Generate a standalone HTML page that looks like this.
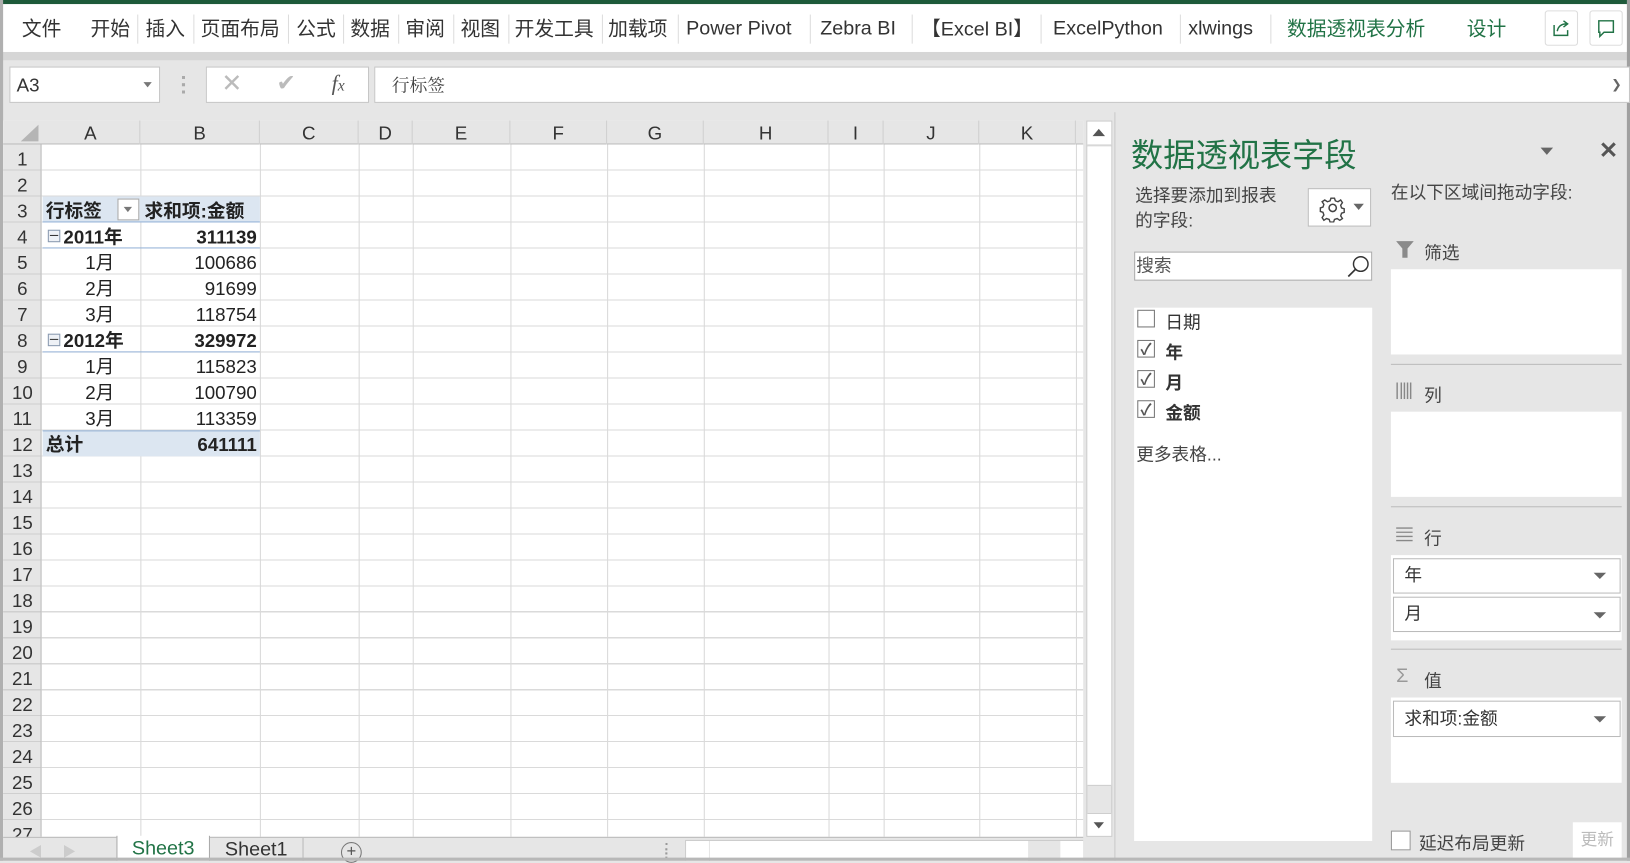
<!DOCTYPE html>
<html><head><meta charset="utf-8">
<style>
*{margin:0;padding:0;box-sizing:border-box}
html,body{width:1630px;height:861px;overflow:hidden;background:#e6e6e6}
#w{position:absolute;left:0;top:0;width:1568px;height:828px;transform:scale(1.03954);transform-origin:0 0;background:#e6e6e6;font-family:"Liberation Sans","Noto Sans CJK SC",sans-serif;color:#222}
.a{position:absolute}
.tab{position:absolute;top:15px;height:28px;line-height:28px;font-size:19px;color:#333;white-space:nowrap;font-family:"Liberation Sans","Noto Sans CJK SC",sans-serif}
.tab.l{top:14px}
.sep{position:absolute;top:14px;width:1px;height:28px;background:#ddd}
.rn{position:absolute;left:3px;width:37px;text-align:center;font-size:18px;color:#333;height:25px;line-height:27px}
.ch{position:absolute;top:116px;height:23px;text-align:center;font-size:18px;color:#333;line-height:24px;border-right:1px solid #d0d0d0}
.cl{position:absolute;top:139px;width:1px;height:666px;background:#d9d9d9}
.c{position:absolute;font-size:18px;height:25px;line-height:26px;white-space:nowrap}
.cb{position:absolute;width:17px;height:17px;border:1px solid #777;background:#fff}
.dd{position:absolute;width:0;height:0;border-left:6px solid transparent;border-right:6px solid transparent;border-top:6px solid #666}
.ck{position:absolute;font-size:15px;color:#555;font-weight:bold}
</style></head><body><div id="w">
<div class="a" style="left:0;top:0;width:1568px;height:4px;background:#1e5a3a"></div>
<div class="a" style="left:0;top:4px;width:1568px;height:46px;background:#fff"></div>
<div class="a" style="left:0;top:50px;width:1568px;height:8px;background:#d6d6d6"></div>
<div class="a" style="left:0;top:0;width:3px;height:828px;background:#b0b0b0"></div>
<div class="a" style="left:1565px;top:0;width:3px;height:828px;background:#a0a0a0"></div>
<span class="tab" style="left:21px">文件</span>
<span class="tab" style="left:87px">开始</span><div class="sep" style="left:132px"></div>
<span class="tab" style="left:140px">插入</span><div class="sep" style="left:186px"></div>
<span class="tab" style="left:193px">页面布局</span><div class="sep" style="left:277px"></div>
<span class="tab" style="left:285px">公式</span><div class="sep" style="left:330px"></div>
<span class="tab" style="left:337px">数据</span><div class="sep" style="left:383px"></div>
<span class="tab" style="left:390px">审阅</span><div class="sep" style="left:436px"></div>
<span class="tab" style="left:443px">视图</span><div class="sep" style="left:489px"></div>
<span class="tab" style="left:495px">开发工具</span><div class="sep" style="left:579px"></div>
<span class="tab" style="left:585px">加载项</span><div class="sep" style="left:652px"></div>
<span class="tab l" style="left:660px">Power Pivot</span><div class="sep" style="left:779px"></div>
<span class="tab l" style="left:789px">Zebra BI</span><div class="sep" style="left:877px"></div>
<span class="tab" style="left:886px">【Excel BI】</span><div class="sep" style="left:1001px"></div>
<span class="tab l" style="left:1013px">ExcelPython</span><div class="sep" style="left:1135px"></div>
<span class="tab l" style="left:1143px">xlwings</span><div class="sep" style="left:1222px"></div>
<span class="tab" style="left:1238px;color:#217346">数据透视表分析</span>
<span class="tab" style="left:1411px;color:#217346">设计</span>
<div class="a" style="left:1486px;top:10px;width:32px;height:34px;border:1px solid #ddd;border-radius:3px"><svg width="30" height="32" viewBox="0 0 30 32"><path d="M8 13v10h13v-5M11 19c1-5 4-7 9-7M17 9l4 3-4 3" fill="none" stroke="#217346" stroke-width="1.4"/></svg></div>
<div class="a" style="left:1529px;top:10px;width:32px;height:34px;border:1px solid #ddd;border-radius:3px"><svg width="30" height="32" viewBox="0 0 30 32"><path d="M8 9h14v11H13l-4 4v-4H8z" fill="none" stroke="#217346" stroke-width="1.4"/></svg></div>
<div class="a" style="left:9px;top:64px;width:145px;height:35px;background:#fff;border:1px solid #c6c6c6;font-size:18px;line-height:34px;padding-left:6px;color:#333">A3</div>
<div class="dd" style="left:138px;top:79px;border-width:5px 4px 0 4px;border-top-color:#777"></div>
<div class="a" style="left:175px;top:73px;width:3px;height:17px;border-left:3px dotted #aaa"></div>
<div class="a" style="left:198px;top:64px;width:157px;height:35px;background:#fff;border:1px solid #c6c6c6"></div>
<span class="a" style="left:213px;top:66px;font-size:24px;color:#bbb">✕</span>
<span class="a" style="left:266px;top:67px;font-size:22px;color:#bbb">✔</span>
<span class="a" style="left:319px;top:68px;font-size:21px;color:#555;font-family:'Liberation Serif',serif;font-style:italic">f<span style="font-size:15px">x</span></span>
<div class="a" style="left:360px;top:64px;width:1208px;height:35px;background:#fff;border:1px solid #c6c6c6;font-size:17px;line-height:32px;padding-left:16px;color:#444;font-family:'Noto Serif CJK SC',serif">行标签</div>
<span class="a" style="left:1550px;top:74px;font-size:12px;color:#666">❯</span>
<div class="a" style="left:3px;top:116px;width:1039px;height:689px;background:#fff"></div>
<div class="a" style="left:3px;top:116px;width:1039px;height:23px;background:#e6e6e6;border-bottom:1px solid #bcbcbc"></div>
<div class="a" style="left:3px;top:139px;width:37px;height:666px;background:#e6e6e6;border-right:1px solid #bcbcbc;background-image:repeating-linear-gradient(to bottom,transparent 0 24px,#cfcfcf 24px 25px)"></div>
<div class="a" style="left:40px;top:139px;width:1002px;height:666px;background-image:repeating-linear-gradient(to bottom,transparent 0 24px,#dadada 24px 25px)"></div>
<svg class="a" style="left:18px;top:119px" width="20" height="18"><path d="M19 1V17H2z" fill="#b5b5b5"/></svg>
<div class="ch" style="left:40px;width:95px">A</div><div class="ch" style="left:135px;width:115px">B</div><div class="ch" style="left:250px;width:95px">C</div><div class="ch" style="left:345px;width:52px">D</div><div class="ch" style="left:397px;width:94px">E</div><div class="ch" style="left:491px;width:93px">F</div><div class="ch" style="left:584px;width:93px">G</div><div class="ch" style="left:677px;width:120px">H</div><div class="ch" style="left:797px;width:53px">I</div><div class="ch" style="left:850px;width:92px">J</div><div class="ch" style="left:942px;width:93px">K</div>
<div class="cl" style="left:135px"></div><div class="cl" style="left:250px"></div><div class="cl" style="left:345px"></div><div class="cl" style="left:397px"></div><div class="cl" style="left:491px"></div><div class="cl" style="left:584px"></div><div class="cl" style="left:677px"></div><div class="cl" style="left:797px"></div><div class="cl" style="left:850px"></div><div class="cl" style="left:942px"></div><div class="cl" style="left:1035px"></div>
<div class="rn" style="top:140px">1</div><div class="rn" style="top:165px">2</div><div class="rn" style="top:190px">3</div><div class="rn" style="top:215px">4</div><div class="rn" style="top:240px">5</div><div class="rn" style="top:265px">6</div><div class="rn" style="top:290px">7</div><div class="rn" style="top:315px">8</div><div class="rn" style="top:340px">9</div><div class="rn" style="top:365px">10</div><div class="rn" style="top:390px">11</div><div class="rn" style="top:415px">12</div><div class="rn" style="top:440px">13</div><div class="rn" style="top:465px">14</div><div class="rn" style="top:490px">15</div><div class="rn" style="top:515px">16</div><div class="rn" style="top:540px">17</div><div class="rn" style="top:565px">18</div><div class="rn" style="top:590px">19</div><div class="rn" style="top:615px">20</div><div class="rn" style="top:640px">21</div><div class="rn" style="top:665px">22</div><div class="rn" style="top:690px">23</div><div class="rn" style="top:715px">24</div><div class="rn" style="top:740px">25</div><div class="rn" style="top:765px">26</div><div class="rn" style="top:790px;height:15px;overflow:hidden">27</div>
<div class="a" style="left:41px;top:189px;width:209px;height:25px;background:#dce6f1;border-bottom:1px solid #95b3d7"></div>
<div class="a" style="left:41px;top:314px;width:209px;height:25px;border-bottom:1px solid #95b3d7"></div>
<div class="a" style="left:41px;top:214px;width:209px;height:25px;border-bottom:1px solid #95b3d7"></div>
<div class="a" style="left:41px;top:414px;width:209px;height:25px;background:#dce6f1;border-top:1px solid #95b3d7"></div>
<div class="c" style="left:44px;top:190px;font-weight:bold">行标签</div>
<div class="a" style="left:113px;top:191px;width:21px;height:21px;background:#fff;border:1px solid #aaa"></div><div class="dd" style="left:119px;top:199px;border-width:5px 4px 0 4px;border-top-color:#777"></div>
<div class="c" style="left:139px;top:190px;font-weight:bold">求和项:金额</div>
<div class="a" style="left:46px;top:221px;width:12px;height:12px;border:1px solid #8a9ab0;background:#eef1f6"></div><div class="a" style="left:48px;top:226px;width:8px;height:1px;background:#333"></div>
<div class="c" style="left:61px;top:215px;font-weight:bold">2011年</div><div class="c" style="left:140px;width:107px;text-align:right;top:215px;font-weight:bold">311139</div>
<div class="c" style="left:82px;top:240px">1月</div><div class="c" style="left:140px;width:107px;text-align:right;top:240px">100686</div>
<div class="c" style="left:82px;top:265px">2月</div><div class="c" style="left:140px;width:107px;text-align:right;top:265px">91699</div>
<div class="c" style="left:82px;top:290px">3月</div><div class="c" style="left:140px;width:107px;text-align:right;top:290px">118754</div>
<div class="a" style="left:46px;top:321px;width:12px;height:12px;border:1px solid #8a9ab0;background:#eef1f6"></div><div class="a" style="left:48px;top:326px;width:8px;height:1px;background:#333"></div>
<div class="c" style="left:61px;top:315px;font-weight:bold">2012年</div><div class="c" style="left:140px;width:107px;text-align:right;top:315px;font-weight:bold">329972</div>
<div class="c" style="left:82px;top:340px">1月</div><div class="c" style="left:140px;width:107px;text-align:right;top:340px">115823</div>
<div class="c" style="left:82px;top:365px">2月</div><div class="c" style="left:140px;width:107px;text-align:right;top:365px">100790</div>
<div class="c" style="left:82px;top:390px">3月</div><div class="c" style="left:140px;width:107px;text-align:right;top:390px">113359</div>
<div class="c" style="left:44px;top:415px;font-weight:bold">总计</div><div class="c" style="left:140px;width:107px;text-align:right;top:415px;font-weight:bold">641111</div>
<div class="a" style="left:1045px;top:116px;width:25px;height:689px;background:#e6e6e6;border:1px solid #ccc"></div>
<div class="a" style="left:1046px;top:117px;width:23px;height:23px;background:#fff;border-bottom:1px solid #ccc"></div>
<div class="a" style="left:1051px;top:124px;border-left:6px solid transparent;border-right:6px solid transparent;border-bottom:7px solid #555"></div>
<div class="a" style="left:1046px;top:141px;width:23px;height:615px;background:#fff;border-bottom:1px solid #ccc"></div>
<div class="a" style="left:1046px;top:782px;width:23px;height:22px;background:#fff;border-top:1px solid #ccc"></div>
<div class="a" style="left:1052px;top:791px;border-left:5px solid transparent;border-right:5px solid transparent;border-top:6px solid #555"></div>
<div class="a" style="left:3px;top:805px;width:1039px;height:23px;background:#e6e6e6;border-top:1px solid #bbb"></div>
<span class="a" style="left:28px;top:809px;font-size:13px;color:#ccc">◀</span><span class="a" style="left:60px;top:809px;font-size:13px;color:#ccc">▶</span>
<div class="a" style="left:112px;top:804px;width:90px;height:24px;background:#fff;border-left:1px solid #aaa;border-right:1px solid #aaa;font-size:19px;color:#217346;text-align:center;line-height:26px">Sheet3</div>
<div class="a" style="left:202px;top:806px;width:90px;height:22px;font-size:19px;color:#333;text-align:center;line-height:24px;border-right:1px solid #bbb">Sheet1</div>
<div class="a" style="left:328px;top:810px;width:20px;height:20px;border:1px solid #777;border-radius:50%;font-size:16px;line-height:18px;text-align:center;color:#555">+</div>
<div class="a" style="left:640px;top:811px;width:2px;height:15px;border-left:2px dotted #999"></div>
<div class="a" style="left:659px;top:808px;width:383px;height:20px;background:#e6e6e6;border:1px solid #ccc"></div>
<div class="a" style="left:683px;top:809px;width:306px;height:19px;background:#fff"></div>
<div class="a" style="left:1020px;top:809px;width:22px;height:19px;background:#fff"></div>
<div class="a" style="left:660px;top:809px;width:22px;height:19px;background:#fff"></div>
<div class="a" style="left:1072px;top:108px;width:1px;height:720px;background:#c8c8c8"></div>
<div class="a" style="left:1088px;top:126px;font-size:31px;color:#217346;font-family:'Noto Sans CJK SC',sans-serif;line-height:42px">数据透视表字段</div>
<div class="a" style="left:1482px;top:142px;border-left:6px solid transparent;border-right:6px solid transparent;border-top:7px solid #666"></div>
<span class="a" style="left:1538px;top:132px;font-size:22px;color:#555;font-weight:bold">✕</span>
<div class="a" style="left:1092px;top:177px;font-size:17px;color:#444;line-height:24px">选择要添加到报表<br>的字段:</div>
<div class="a" style="left:1258px;top:181px;width:61px;height:37px;background:#fff;border:1px solid #bbb"></div>
<svg class="a" style="left:1268px;top:186px" width="28" height="28" viewBox="0 0 28 28"><path d="M12 3h4l1 3 3 1 3-2 2 3-2 3 1 3 3 1v4l-3 1-1 3 2 3-3 2-3-2-3 1-1 3h-4l-1-3-3-1-3 2-2-3 2-3-1-3-3-1v-4l3-1 1-3-2-3 3-2 3 2 3-1z" transform="scale(.85) translate(2.5 2.5)" fill="none" stroke="#444" stroke-width="1.6"/><circle cx="14" cy="14" r="3.5" fill="none" stroke="#444" stroke-width="1.5"/></svg>
<div class="a" style="left:1302px;top:196px;border-left:5px solid transparent;border-right:5px solid transparent;border-top:6px solid #666"></div>
<div class="a" style="left:1091px;top:242px;width:229px;height:28px;background:#fff;border:1px solid #aaa;font-size:17px;color:#555;line-height:26px;padding-left:1px">搜索</div>
<svg class="a" style="left:1294px;top:244px" width="26" height="26"><circle cx="15" cy="10" r="7" fill="none" stroke="#333" stroke-width="1.4"/><path d="M10 15 3 22" stroke="#333" stroke-width="1.6"/></svg>
<div class="a" style="left:1091px;top:296px;width:229px;height:513px;background:#fff"></div>
<div class="cb" style="left:1094px;top:298px"></div><div class="a" style="left:1121px;top:296px;font-size:17px;color:#333">日期</div>
<div class="cb" style="left:1094px;top:327px"></div><span class="ck" style="left:1097px;top:325px">✓</span><div class="a" style="left:1121px;top:325px;font-size:17px;font-weight:bold;color:#333">年</div>
<div class="cb" style="left:1094px;top:356px"></div><span class="ck" style="left:1097px;top:354px">✓</span><div class="a" style="left:1121px;top:354px;font-size:17px;font-weight:bold;color:#333">月</div>
<div class="cb" style="left:1094px;top:385px"></div><span class="ck" style="left:1097px;top:383px">✓</span><div class="a" style="left:1121px;top:383px;font-size:17px;font-weight:bold;color:#333">金额</div>
<div class="a" style="left:1093px;top:423px;font-size:17px;color:#444">更多表格...</div>
<div class="a" style="left:1338px;top:171px;font-size:17px;color:#444">在以下区域间拖动字段:</div>
<svg class="a" style="left:1343px;top:231px" width="18" height="18"><path d="M0 1h17l-6 7v9h-5V8z" fill="#8a8a8a"/></svg>
<div class="a" style="left:1370px;top:229px;font-size:17px;color:#444">筛选</div>
<div class="a" style="left:1338px;top:259px;width:222px;height:82px;background:#fff"></div>
<div class="a" style="left:1338px;top:350px;width:222px;height:1px;background:#bbb"></div>
<svg class="a" style="left:1343px;top:368px" width="16" height="16"><path d="M1 0v16M5 0v16M8 0v16M11 0v16M14 0v16" stroke="#888" stroke-width="1.4"/></svg>
<div class="a" style="left:1370px;top:366px;font-size:17px;color:#444">列</div>
<div class="a" style="left:1338px;top:396px;width:222px;height:82px;background:#fff"></div>
<div class="a" style="left:1338px;top:487px;width:222px;height:1px;background:#bbb"></div>
<svg class="a" style="left:1343px;top:507px" width="16" height="14"><path d="M0 1h16M0 5h16M0 9h16M0 13h16" stroke="#888" stroke-width="1.3"/></svg>
<div class="a" style="left:1370px;top:504px;font-size:17px;color:#444">行</div>
<div class="a" style="left:1338px;top:534px;width:222px;height:82px;background:#fff"></div>
<div class="a" style="left:1340px;top:537px;width:219px;height:34px;border:1px solid #bbb;font-size:17px;line-height:32px;padding-left:10px;color:#333">年</div><div class="dd" style="left:1533px;top:551px"></div>
<div class="a" style="left:1340px;top:574px;width:219px;height:34px;border:1px solid #bbb;font-size:17px;line-height:32px;padding-left:10px;color:#333">月</div><div class="dd" style="left:1533px;top:589px"></div>
<div class="a" style="left:1338px;top:624px;width:222px;height:1px;background:#bbb"></div>
<div class="a" style="left:1343px;top:640px;font-size:19px;color:#999">Σ</div>
<div class="a" style="left:1370px;top:641px;font-size:17px;color:#444">值</div>
<div class="a" style="left:1338px;top:671px;width:222px;height:82px;background:#fff"></div>
<div class="a" style="left:1340px;top:674px;width:219px;height:35px;border:1px solid #bbb;font-size:17px;line-height:33px;padding-left:10px;color:#333">求和项:金额</div><div class="dd" style="left:1533px;top:689px"></div>
<div class="a" style="left:1338px;top:799px;width:19px;height:19px;border:1px solid #999;background:#fff"></div>
<div class="a" style="left:1365px;top:797px;font-size:17px;color:#444">延迟布局更新</div>
<div class="a" style="left:1513px;top:791px;width:47px;height:35px;background:#fff;font-size:16px;color:#bbb;line-height:35px;text-align:center">更新</div>
<div class="a" style="left:0;top:825px;width:1568px;height:3px;background:#b8b8b8"></div>
</div></body></html>
